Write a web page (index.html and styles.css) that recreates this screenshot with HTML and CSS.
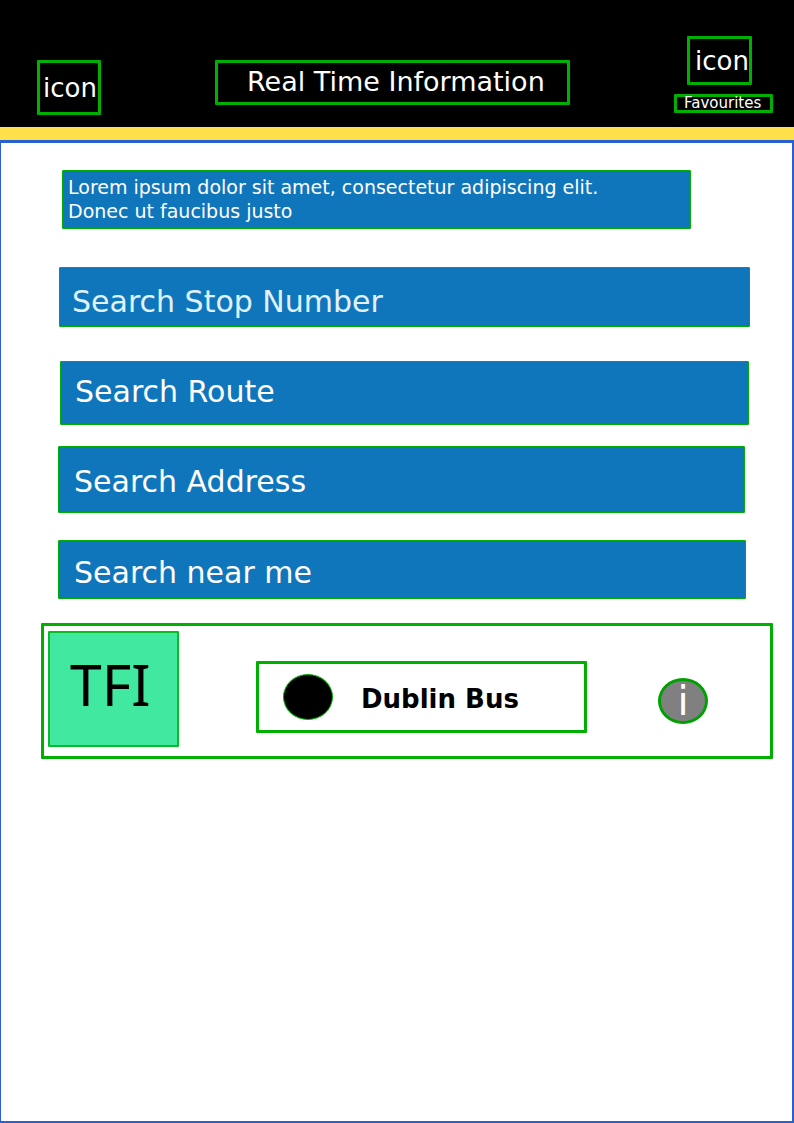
FILE: index.html
```html
<!DOCTYPE html>
<html lang="en">
<head>
<meta charset="utf-8">
<meta name="viewport" content="width=device-width, initial-scale=1">
<title>Real Time Information</title>
<link rel="stylesheet" href="styles.css">
</head>
<body>
<header class="header">
  <button class="outline icon" type="button">icon</button>
  <h1 class="outline title">Real Time Information</h1>
  <div class="favourites">
    <button class="outline icon icon-favourites" type="button" aria-labelledby="favourites-label">icon</button>
    <span class="outline favourites-label" id="favourites-label">Favourites</span>
  </div>
</header>
<main class="main">
  <p class="intro">Lorem ipsum dolor sit amet, consectetur adipiscing elit.<br>Donec ut faucibus justo</p>
  <input class="search search-stop" type="text" placeholder="Search Stop Number" aria-label="Search Stop Number">
  <button class="search search-route" type="button">Search Route</button>
  <button class="search search-address" type="button">Search Address</button>
  <button class="search search-near" type="button">Search near me</button>
  <section class="outline operators">
    <div class="tfi">TFI</div>
    <div class="outline bus">
      <span class="dot"></span>
      <strong class="bus-name">Dublin Bus</strong>
    </div>
    <button class="info" type="button" aria-label="Information">i</button>
  </section>
</main>
</body>
</html>
```
FILE: styles.css
```css
* {
  box-sizing: border-box;
}

body {
  display: flex;
  flex-direction: column;
  min-height: 100vh;
  margin: 0;
  background: #fff;
  color: #000;
  font-family: "DejaVu Sans", Verdana, sans-serif;
}

button,
input {
  font-family: inherit;
}

.outline {
  border: 3px solid #00b000;
  border-radius: 1px;
}

.header {
  display: flex;
  align-items: flex-start;
  padding: 36px 21px 12px 37px;
  background: #000;
  border-bottom: 13px solid #ffdf4a;
  color: #fff;
}

.icon {
  flex: none;
  width: 64px;
  margin: 24px 0 0;
  padding: 10px 0 9px 3px;
  background: transparent;
  color: inherit;
  font-size: 26px;
  line-height: 30px;
  text-align: left;
}

.title {
  flex: 1;
  margin: 24px 104px 0 114px;
  padding: 4px 0 5px 29px;
  font-size: 27px;
  font-weight: normal;
  line-height: 30px;
  white-space: nowrap;
}

.favourites {
  display: flex;
  flex-direction: column;
  gap: 9px;
  width: 99px;
}

.icon-favourites {
  width: 65px;
  margin: 0 0 0 13px;
  padding: 7px 0 6px 5px;
}

.favourites-label {
  padding: 0 0 1px 7px;
  font-size: 15px;
  line-height: 12px;
}

.main {
  display: flex;
  flex: 1;
  flex-direction: column;
  border: solid #2860d4;
  border-width: 3px 2px 2px 1px;
}

.intro {
  margin: 27px 101px 38px 61px;
  padding: 4px 5px 5px;
  background: #1076bc;
  border: 1px solid #00b000;
  border-radius: 1px;
  color: #fff;
  font-size: 19px;
  line-height: 24px;
}

.search {
  padding: 0;
  background: #1076bc;
  border: 1px solid #00b000;
  border-radius: 1px;
  color: #fff;
  font-size: 30px;
  line-height: 34px;
  text-align: left;
}

.search-stop {
  height: 60px;
  margin: 0 42px 34px 58px;
  padding: 16px 12px 8px;
}

.search-stop::placeholder {
  color: #e0f2ff;
  opacity: 1;
}

.search-route {
  margin: 0 43px 21px 59px;
  padding: 13px 14px 15px;
}

.search-address {
  margin: 0 47px 27px 57px;
  padding: 18px 15px 13px;
}

.search-near {
  margin: 0 46px 24px 57px;
  padding: 15px 15px 8px;
}

.operators {
  display: flex;
  align-items: flex-start;
  margin: 0 19px 0 40px;
  padding: 5px 62px 9px 4px;
}

.tfi {
  flex: none;
  width: 131px;
  padding: 20px 0 30px 20px;
  background: #40e8a0;
  border: 2px solid #08bc28;
  border-radius: 1px;
  font-family: "Noto Sans", sans-serif;
  font-size: 57px;
  line-height: 62px;
}

.bus {
  display: flex;
  flex: 1;
  align-items: center;
  gap: 28px;
  margin: 30px 71px 0 77px;
  padding: 10px 24px;
}

.dot {
  flex: none;
  width: 50px;
  height: 46px;
  background: #000;
  border: 1px solid #00b000;
  border-radius: 50%;
}

.bus-name {
  padding-top: 4px;
  font-size: 26px;
  line-height: 30px;
  white-space: nowrap;
}

.info {
  flex: none;
  width: 50px;
  margin: 47px 0 0;
  padding: 0;
  background: #808080;
  border: 3px solid #00a000;
  border-radius: 50%;
  color: #fff;
  font-size: 40px;
  line-height: 40px;
}
```
